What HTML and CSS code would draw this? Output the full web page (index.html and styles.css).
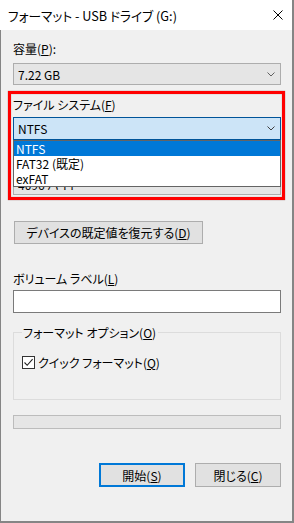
FILE: index.html
```html
<!DOCTYPE html>
<html lang="ja">
<head>
<meta charset="utf-8">
<title>フォーマット - USB ドライブ (G:)</title>
<link rel="stylesheet" href="styles.css">
</head>
<body>
<div class="window">
  <div class="titlebar">
    <span class="title">フォーマット - USB ドライブ (G:)</span>
    <svg class="close" width="10" height="10" viewBox="0 0 10 10"><path d="M0.5 0.5 L9.5 9.5 M9.5 0.5 L0.5 9.5" stroke="#000" stroke-width="1" fill="none"/></svg>
  </div>
  <div class="content">
    <div class="label">容量(<u>P</u>):</div>
    <div class="combo">
      <span class="combo-text">7.22 GB</span>
      <svg class="chev" width="8" height="5" viewBox="0 0 8 5"><path d="M0.5 0.5 L4 4 L7.5 0.5" stroke="#606060" fill="none"/></svg>
    </div>

    <div class="highlight">
      <div class="label">ファイル システム(<u>F</u>)</div>
      <div class="combo combo-open">
        <span class="combo-text">NTFS</span>
        <svg class="chev" width="8" height="5" viewBox="0 0 8 5"><path d="M0.5 0.5 L4 4 L7.5 0.5" stroke="#404040" fill="none"/></svg>
        <ul class="droplist">
          <li class="item selected">NTFS</li>
          <li class="item">FAT32 (既定)</li>
          <li class="item">exFAT</li>
        </ul>
      </div>
      <div class="label label-alloc">アロケーション ユニット サイズ(<u>A</u>)</div>
      <div class="combo">
        <span class="combo-text">4096 バイト</span>
        <svg class="chev" width="8" height="5" viewBox="0 0 8 5"><path d="M0.5 0.5 L4 4 L7.5 0.5" stroke="#606060" fill="none"/></svg>
      </div>
    </div>

    <button class="btn btn-restore">デバイスの既定値を復元する(<u>D</u>)</button>

    <div class="label label-vol">ボリューム ラベル(<u>L</u>)</div>
    <div class="textbox"></div>

    <div class="group">
      <span class="legend">フォーマット オプション(<u>O</u>)</span>
      <div class="check">
        <span class="checkbox"><svg width="11" height="11" viewBox="0 0 11 11"><path d="M1.5 5.5 L4.2 8.3 L9.6 2.2" stroke="#222" stroke-width="1.1" fill="none"/></svg></span>
        <span>クイック フォーマット(<u>Q</u>)</span>
      </div>
    </div>

    <div class="progress"></div>

    <div class="actions">
      <button class="btn btn-default">開始(<u>S</u>)</button>
      <button class="btn">閉じる(<u>C</u>)</button>
    </div>
  </div>
</div>
</body>
</html>
```

FILE: styles.css
```css
* { box-sizing: border-box; }
html, body { margin: 0; padding: 0; }
body {
  width: 294px;
  height: 523px;
  font-family: "Noto Sans CJK JP", "Noto Sans", sans-serif;
  font-size: 12px;
  line-height: 15px;
  color: #000;
  font-feature-settings: "palt" 1;
  background: #f0f0f0;
}
u { text-decoration: underline; text-underline-offset: 1px; }

.window {
  width: 294px;
  height: 523px;
  display: flex;
  flex-direction: column;
  background: #f0f0f0;
  border-right: 2px solid #858585;
  border-bottom: 2px solid #858585;
}
.titlebar {
  height: 30px;
  flex: none;
  background: #fff;
  display: flex;
  align-items: center;
  justify-content: space-between;
  padding-left: 8px;
  padding-right: 9px;
}
.title { font-size: 12.7px; white-space: nowrap; }
.close { display: block; }

.content {
  flex: 1;
  border-left: 1px solid #858585;
  padding: 11px 11px 0 12px;
  display: flex;
  flex-direction: column;
}
.label { height: 15px; white-space: nowrap; }

.combo {
  position: relative;
  height: 22px;
  margin-top: 7px;
  border: 1px solid #adadad;
  background: #e5e5e5;
  display: flex;
  align-items: center;
  justify-content: space-between;
  padding: 0 5px 0 4px;
}
.combo-text { white-space: nowrap; }
.chev { display: block; }

.highlight {
  position: relative;
  margin-top: 12px;
}
.highlight::after {
  content: "";
  position: absolute;
  top: -6px;
  left: -5px;
  right: -4px;
  bottom: -5px;
  border: 3px solid #ff0000;
  box-shadow: 0 0 1px 0 rgba(90, 0, 0, 0.6), inset 0 0 1px 0 rgba(90, 0, 0, 0.6);
  pointer-events: none;
  z-index: 3;
}
.highlight .combo { margin-top: 5px; }
.combo-open {
  height: 23px;
  border-color: #005499;
  background: #cce4f7;
  z-index: 2;
}
.label-alloc { margin-top: 13px; visibility: hidden; }

.droplist {
  position: absolute;
  top: calc(100% + 1px);
  left: -1px;
  right: -1px;
  margin: 0;
  padding: 0;
  list-style: none;
  background: #fff;
  border: 1px solid #646464;
}
.item {
  height: 15px;
  line-height: 15px;
  padding-left: 2px;
  white-space: nowrap;
}
.item.selected { background: #0078d7; color: #fff; }

.btn {
  font: inherit;
  font-feature-settings: "palt" 1;
  color: #000;
  background: #e1e1e1;
  border: 1px solid #adadad;
  padding: 0;
  margin: 0;
  height: 23px;
  line-height: 15px;
  white-space: nowrap;
}
.btn-restore {
  margin-top: 26px;
  margin-left: 1px;
  width: 189px;
  align-self: flex-start;
}
.label-vol { margin-top: 27px; }
.textbox {
  margin-top: 4px;
  height: 23px;
  background: #fff;
  border: 1px solid #7a7a7a;
}

.group {
  margin-top: 19px;
  height: 68px;
  border: 1px solid #dcdcdc;
  padding: 0 0 0 8px;
  display: flex;
  flex-direction: column;
  align-items: flex-start;
}
.legend {
  margin-top: -8px;
  padding: 0 2px 0 1px;
  background: #f0f0f0;
  height: 15px;
  white-space: nowrap;
}
.check {
  margin-top: 15px;
  display: flex;
  align-items: center;
  gap: 3px;
  height: 15px;
  white-space: nowrap;
}
.checkbox {
  width: 13px;
  height: 13px;
  border: 1px solid #333;
  background: #fff;
  display: flex;
  align-items: center;
  justify-content: center;
}
.checkbox svg { display: block; }

.progress {
  margin-top: 15px;
  height: 14px;
  background: #e6e6e6;
  border: 1px solid #bcbcbc;
}

.actions {
  margin-top: 34px;
  display: flex;
  justify-content: flex-end;
  gap: 10px;
}
.actions .btn { width: 86px; height: 24px; }
.btn-default { border: 2px solid #0078d7; }
```
